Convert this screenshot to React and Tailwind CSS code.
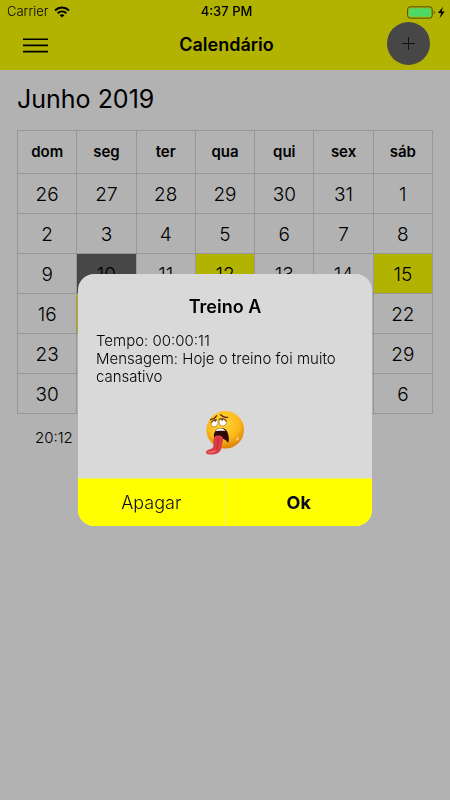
import React, { useState } from 'react';

const WEEKDAYS = ['dom', 'seg', 'ter', 'qua', 'qui', 'sex', 'sáb'];

const WEEKS = [
  [26, 27, 28, 29, 30, 31, 1],
  [2, 3, 4, 5, 6, 7, 8],
  [9, 10, 11, 12, 13, 14, 15],
  [16, 17, 18, 19, 20, 21, 22],
  [23, 24, 25, 26, 27, 28, 29],
  [30, 1, 2, 3, 4, 5, 6],
];

const SELECTED_WEEK = 2;
const TRAINED = ['2-12', '2-15', '3-17'];

function WifiIcon() {
  return (
    <svg width="16" height="12" viewBox="0 0 16 12" fill="none" stroke="#000" strokeWidth="2" aria-hidden="true">
      <path d="M1 4.4C5 .6 11 .6 15 4.4" />
      <path d="M3.6 7.2c2.6-2.3 6.2-2.3 8.8 0" />
      <path d="M8 11.4 5.6 9.2c1.4-1.2 3.4-1.2 4.8 0z" fill="#000" stroke="none" />
    </svg>
  );
}

function BatteryIcon() {
  return (
    <svg width="40" height="13" viewBox="0 0 40 13" aria-hidden="true">
      <rect x="1.6" y=".8" width="24.6" height="11.4" rx="2.6" fill="none" stroke="#000" strokeOpacity=".55" strokeWidth="1" />
      <rect x="3" y="2.2" width="22" height="8.6" rx="1.2" fill="#4cd964" />
      <path d="M27.6 4.6c1.8.6 1.8 3.2 0 3.8z" fill="#000" fillOpacity=".4" />
      <path d="M37 .8 32 7h3.2l-1.6 5.2L38.8 5.6h-3.2z" fill="#000" />
    </svg>
  );
}

function TiredFace() {
  return (
    <svg width="40" height="44" viewBox="0 0 40 44" role="img" aria-label="Cansado">
      <defs>
        <radialGradient id="face" cx=".45" cy=".32" r=".68">
          <stop offset="0" stopColor="#ffd83a" />
          <stop offset=".65" stopColor="#fdb71a" />
          <stop offset="1" stopColor="#d97f08" />
        </radialGradient>
      </defs>
      <circle cx="20.2" cy="18.8" r="18.8" fill="url(#face)" />
      <path d="M5.6 8.6c2.6-.4 4.8-1.6 6-3.8M15.6 3.8c1.8 2 4.2 3 7 2.6" fill="none" stroke="#5c2c06" strokeWidth="1.3" strokeLinecap="round" />
      <ellipse cx="9.6" cy="12.2" rx="3.2" ry="3.8" fill="#fff" stroke="#9c6412" strokeWidth=".6" transform="rotate(24 9.6 12.2)" />
      <ellipse cx="17.8" cy="11.2" rx="3.8" ry="3.8" fill="#fff" stroke="#9c6412" strokeWidth=".6" />
      <path d="M6.4 11.4c1.2-2 3-3 5-2.8M14.2 8.4c2.4-1.2 5.4-.4 7 1.8" fill="none" stroke="#8a4c0c" strokeWidth="1.2" strokeLinecap="round" />
      <circle cx="10.2" cy="9.8" r=".9" fill="#333" />
      <circle cx="17.2" cy="8.8" r=".9" fill="#333" />
      <path d="M9.2 28c-1.2-6 1.4-10.600 6.200-11 4.600-.2 7.200 2.600 8 7.400.6 2.800.8 5.400-.4 7.400-2-2.600-4-3.800-6-4-2.800-.4-5.600-.8-7.800.2z" fill="#2c0a08" />
      <path d="M10.600 20.200c1-2 2.600-3 4.600-3 2.200 0 4 1 5.200 3-3-.6-6.600-.4-9.800 0z" fill="#fff" />
      <path d="M8.600 28c.4-2.800 2.600-4.200 4.800-3.400 1.800-.6 4.200.4 4.600 2.600.2 3.600-1.200 5.800-1.400 8.400-.2 3.600-2 6.400-5.800 7.400-3.800.8-8 .8-9.400-.6-1.200-1.600.6-3.600 3.400-4.200 2.400-.6 3.400-1.400 3.600-3.400.2-2.400-.4-4.400.2-6.800z" fill="#d93d45" />
      <path d="M13 28c.4 4-.6 7.400-1.200 9.600" fill="none" stroke="#b3262e" strokeWidth=".9" strokeLinecap="round" />
      <path d="M3.800 41c2 .4 4.600 0 6.400-1" fill="none" stroke="#f58b8b" strokeWidth="1" strokeLinecap="round" />
      <ellipse cx="32.600" cy="28" rx=".8" ry="2" fill="#ffe27a" transform="rotate(35 32.600 28)" />
    </svg>
  );
}

function dayClass(week, day) {
  if (week === SELECTED_WEEK && day === 10) return 'bg-[#666666]';
  if (TRAINED.includes(`${week}-${day}`)) return 'bg-[#ffff00]';
  return '';
}

function Calendar() {
  return (
    <table className="w-full table-fixed border-collapse text-center">
      <thead>
        <tr className="h-[43px]">
          {WEEKDAYS.map((name) => (
            <th key={name} className="border border-[#d9d9d9] text-[15px] font-semibold">{name}</th>
          ))}
        </tr>
      </thead>
      <tbody>
        {WEEKS.map((days, week) => (
          <tr key={week} className="h-10">
            {days.map((day) => (
              <td key={day} className={`border border-[#d9d9d9] pt-[2px] text-[19px] leading-7 font-light ${dayClass(week, day)}`}>{day}</td>
            ))}
          </tr>
        ))}
      </tbody>
    </table>
  );
}

function TrainingDialog({ onClose }) {
  return (
    <div className="fixed inset-0 z-50 flex items-center justify-center bg-black/30 px-[78px]">
      <div
        role="dialog"
        aria-labelledby="training-title"
        className="w-full max-w-sm overflow-hidden rounded-2xl bg-[#d9d9d9]"
      >
        <div className="px-[18px] pt-[21px] pb-[23px]">
          <h2 id="training-title" className="text-center text-lg leading-6 font-semibold">Treino A</h2>
          <div className="mt-[13px] text-[15px] leading-[18px] font-light">
            <p>Tempo: 00:00:11</p>
            <p>Mensagem: Hoje o treino foi muito cansativo</p>
          </div>
          <div className="mt-[25px] flex justify-center">
            <TiredFace />
          </div>
        </div>
        <div className="flex border-t border-[#eeee70] bg-[#ffff00] text-lg text-[#0a0a28]">
          <button className="h-[47px] flex-1 border-r border-[#eeee70] font-light" onClick={onClose}>Apagar</button>
          <button className="h-[47px] flex-1 font-bold" onClick={onClose}>Ok</button>
        </div>
      </div>
    </div>
  );
}

function App() {
  const [open, setOpen] = useState(true);

  return (
    <div className="min-h-screen bg-white font-[Inter,sans-serif] text-black">
      <header className="bg-[#ffff00]">
        {/* the status bar stays above the dimmed backdrop */}
        <div className="relative z-[60] grid h-[22px] grid-cols-3 items-center pt-[2px] pr-1 pl-[7px] text-[13px]">
          <div className="flex items-center gap-[6px]">
            <span className="font-light">Carrier</span>
            <WifiIcon />
          </div>
          <span className="text-center font-medium">4:37 PM</span>
          <div className="flex justify-end">
            <BatteryIcon />
          </div>
        </div>
        <div className="grid h-12 grid-cols-3 items-center pr-5 pb-[2px] pl-[23px]">
          <button aria-label="Menu" className="justify-self-start">
            <svg width="25" height="15" viewBox="0 0 25 15" stroke="#000" strokeWidth="1.6">
              <path d="M0 1.2h25M0 7.4h25M0 13.6h25" />
            </svg>
          </button>
          <h1 className="text-center text-lg font-semibold">Calendário</h1>
          <button
            aria-label="Adicionar"
            className="flex size-[43px] items-center justify-center self-start justify-self-end rounded-full bg-[#666666]"
          >
            <svg width="13" height="13" viewBox="0 0 13 13" stroke="#1a1a1a" strokeWidth="1">
              <path d="M6.5 0v13M0 6.5h13" />
            </svg>
          </button>
        </div>
      </header>

      <main className="px-[17px] pt-3">
        <h2 className="mb-[14px] text-[25px] leading-[34px]">Junho 2019</h2>
        <Calendar />
        <p className="mt-3 pl-[18px] text-[15px] leading-6 font-light">20:12</p>
      </main>

      {open && <TrainingDialog onClose={() => setOpen(false)} />}
    </div>
  );
}

export default App;
